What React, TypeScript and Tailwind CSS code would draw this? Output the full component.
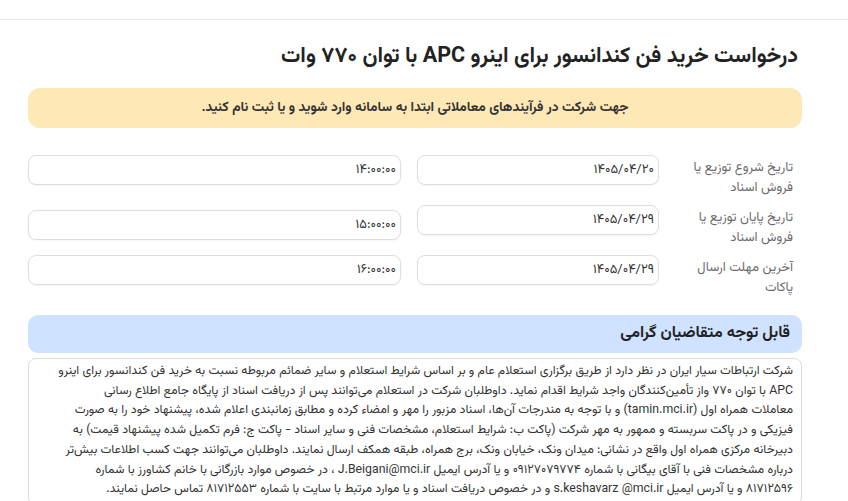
import React from "react"

const FONT = "font-['Vazirmatn','DejaVu_Sans',sans-serif]"

type Row = { label: string; date: string; time: string; timeOffset?: boolean }

const ROWS: Row[] = [
  { label: "تاریخ شروع توزیع یا فروش اسناد", date: "۱۴۰۵/۰۴/۲۰", time: "۱۴:۰۰:۰۰" },
  { label: "تاریخ پایان توزیع یا فروش اسناد", date: "۱۴۰۵/۰۴/۲۹", time: "۱۵:۰۰:۰۰", timeOffset: true },
  { label: "آخرین مهلت ارسال پاکات", date: "۱۴۰۵/۰۴/۲۹", time: "۱۶:۰۰:۰۰" },
]

const NOTICE_LINES = [
  "شرکت ارتباطات سیار ایران در نظر دارد از طریق برگزاری استعلام عام و بر اساس شرایط استعلام و سایر ضمائم مربوطه نسبت به خرید فن کندانسور برای اینرو",
  "APC با توان ۷۷۰ واز تأمین‌کنندگان واجد شرایط اقدام نماید. داوطلبان شرکت در استعلام می‌توانند پس از دریافت اسناد از پایگاه جامع اطلاع رسانی",
  "معاملات همراه اول (tamin.mci.ir) و با توجه به مندرجات آن‌ها، اسناد مزبور را مهر و امضاء کرده و مطابق زمانبندی اعلام شده، پیشنهاد خود را به صورت",
  "فیزیکی و در پاکت سربسته و ممهور به مهر شرکت (پاکت ب: شرایط استعلام، مشخصات فنی و سایر اسناد - پاکت ج: فرم تکمیل شده پیشنهاد قیمت) به",
  "دبیرخانه مرکزی همراه اول واقع در نشانی: میدان ونک، خیابان ونک، برج همراه، طبقه همکف ارسال نمایند. داوطلبان می‌توانند جهت کسب اطلاعات بیش‌تر",
  "درباره مشخصات فنی با آقای بیگانی با شماره ۰۹۱۲۷۰۷۹۷۷۴ و یا آدرس ایمیل J.Beigani@mci.ir ، در خصوص موارد بازرگانی با خانم کشاورز با شماره",
  "۸۱۷۱۲۵۹۶ و یا آدرس ایمیل s.keshavarz @mci.ir و در خصوص دریافت اسناد و یا موارد مرتبط با سایت با شماره ۸۱۷۱۲۵۵۳ تماس حاصل نمایند.",
]

function Field({ value, className = "" }: { value: string; className?: string }) {
  return (
    <input
      readOnly
      value={value}
      className={`h-[30px] rounded-lg border border-[#dedede] bg-white px-1 text-right text-[13px] text-[#333] shadow-[0_1px_2px_rgba(0,0,0,0.04)] outline-none ${FONT} ${className}`}
    />
  )
}

export default function App() {
  return (
    <div dir="rtl" className={`min-h-screen bg-white text-[#222] ${FONT}`}>
      <div className="h-5 border-b border-[#e5e5e5]" />

      <div className="mr-[46px] w-[774px]">
        <h1 className="mt-[22px] pr-[4px] text-[21.5px] font-bold leading-[30px] text-[#222]">
          درخواست خرید فن کندانسور برای اینرو APC با توان ۷۷۰ وات
        </h1>

        <div className="mt-4 flex h-10 items-center justify-center rounded-xl bg-[#fde8b6] text-[13.7px] font-bold text-[#333]">
          جهت شرکت در فرآیندهای معاملاتی ابتدا به سامانه وارد شوید و یا ثبت نام کنید.
        </div>

        <div className="mt-[27px] flex flex-col gap-[7px]">
          {ROWS.map((r) => (
            <div key={r.label} className="flex items-start">
              <div className="w-[143px] shrink-0 pr-[9px] pl-[28px] pt-[3px] text-[13px] leading-5 text-[#6b6b6b]">
                {r.label}
              </div>
              <Field value={r.date} className="w-[242px]" />
              <Field value={r.time} className={`mr-4 w-[373px] ${r.timeOffset ? "mt-[5px]" : ""}`} />
            </div>
          ))}
        </div>

        <div className="mt-[17px] flex h-[38px] items-center rounded-[10px] bg-[#cfe2ff] pr-3 text-[16px] font-bold text-[#222]">
          قابل توجه متقاضیان گرامی
        </div>

        <div className="mt-[5px] rounded-lg border border-[#dcdcdc] px-2 pt-[3px] pb-1 text-[12.3px] leading-[19.7px] text-[#333]">
          {NOTICE_LINES.map((line, i) => (
            <p key={i}>{line}</p>
          ))}
        </div>
      </div>
    </div>
  )
}
